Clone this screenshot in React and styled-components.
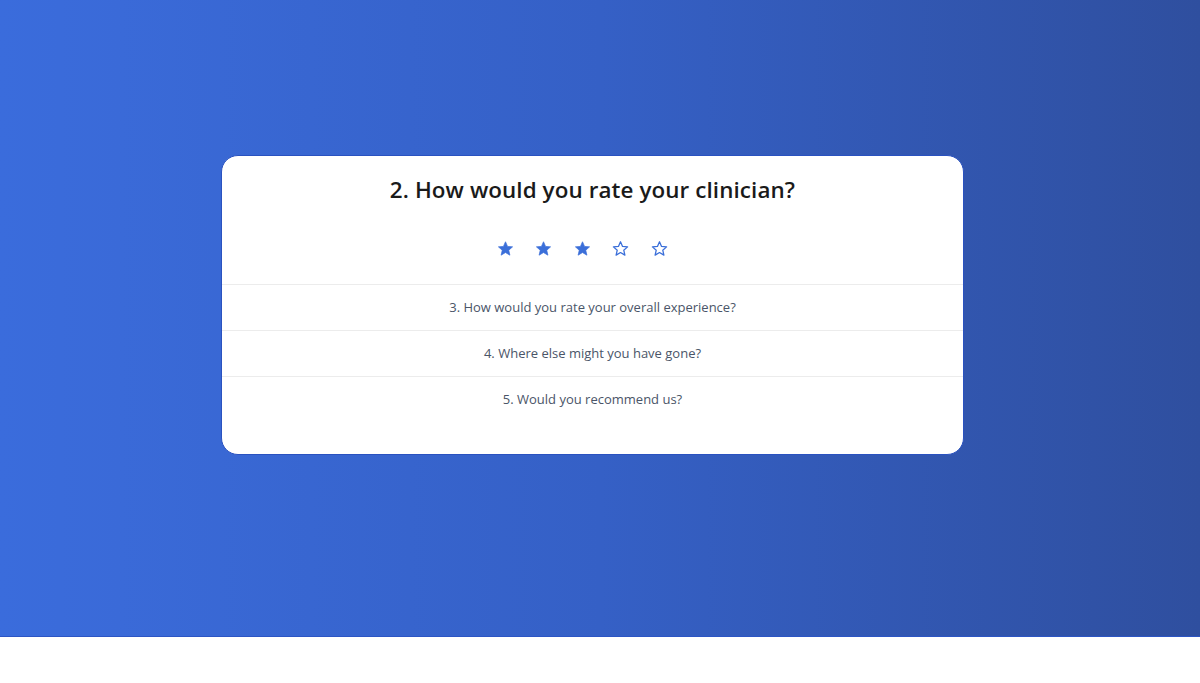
import React from "react";
import styled, { createGlobalStyle } from "styled-components";

const Global = createGlobalStyle`
  html, body { margin: 0; padding: 0; background: #fff; }
  body { font-family: "Open Sans", "Noto Sans", sans-serif; }
`;

const Band = styled.section`
  height: 637px;
  background: linear-gradient(90deg, #3a6cdc 0%, #3a6ad8 10%, #3560c6 50%, #2f4f9f 100%);
  border-bottom: 1px solid #2c55c4;
  display: flex;
  justify-content: center;
  align-items: flex-start;
  padding: 155px 15px 0 0;
  box-sizing: border-box;
`;

const Card = styled.div`
  width: 743px;
  box-sizing: border-box;
  background: #fff;
  border: 1px solid #2a52c0;
  border-radius: 17px;
  padding: 19px 0 32px;
  display: flex;
  flex-direction: column;
`;

const Title = styled.h2`
  margin: 0;
  text-align: center;
  font-size: 22.4px;
  line-height: 30px;
  font-weight: 600;
  color: #1a1a1a;
  letter-spacing: 0.1px;
`;

const Stars = styled.div`
  display: flex;
  justify-content: center;
  gap: 21.5px;
  margin-top: 35px;
  height: 16px;
  margin-bottom: 28px;
  padding-right: 21px;
`;

const StarBox = styled.svg`
  width: 17px;
  height: 17px;
  display: block;
`;

const Row = styled.div`
  border-top: 1px solid #ececec;
  height: 45px;
  display: flex;
  align-items: center;
  justify-content: center;
  font-size: 13px;
  color: #4a5568;
  padding-bottom: 1px;
  box-sizing: border-box;
  height: 46px;
`;

const Star = ({ filled }) => (
  <StarBox viewBox="0 0 24 24">
    <path
      d="M12 2.5l2.9 6.6 7.1.6-5.4 4.7 1.6 7-6.2-3.7-6.2 3.7 1.6-7L2 9.7l7.1-.6z"
      fill={filled ? "#3b6fd9" : "none"}
      stroke="#3b6fd9"
      strokeWidth={filled ? 1 : 1.8}
      strokeLinejoin="round"
    />
  </StarBox>
);

const questions = [
  "3. How would you rate your overall experience?",
  "4. Where else might you have gone?",
  "5. Would you recommend us?",
];

export default function App() {
  return (
    <>
      <Global />
      <Band>
        <Card>
          <Title>2. How would you rate your clinician?</Title>
          <Stars>
            {[1, 2, 3, 4, 5].map((i) => (
              <Star key={i} filled={i <= 3} />
            ))}
          </Stars>
          {questions.map((q) => (
            <Row key={q}>{q}</Row>
          ))}
        </Card>
      </Band>
    </>
  );
}
